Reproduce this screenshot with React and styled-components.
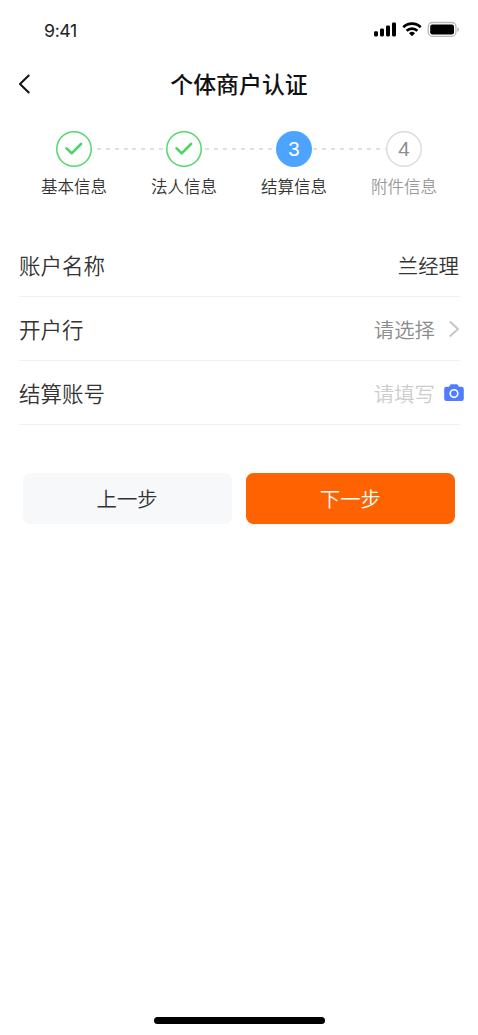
import React from "react";
import styled, { createGlobalStyle } from "styled-components";

const GlobalStyle = createGlobalStyle`
  * { box-sizing: border-box; }
  body {
    margin: 0;
    background: #fff;
    font-family: "Noto Sans CJK SC", sans-serif;
    font-weight: 350;
    color: #333;
  }
  button { font: inherit; border: 0; padding: 0; background: none; }
`;

const Screen = styled.div`
  width: 478px;
  height: 1035px;
  display: flex;
  flex-direction: column;
  background: #fff;
  overflow: hidden;
`;

const StatusBar = styled.header`
  height: 56px;
  padding: 2px 18px 0 44px;
  display: flex;
  align-items: center;
  justify-content: space-between;
`;

const Time = styled.span`
  font: 400 17.8px/22px Inter, sans-serif;
  letter-spacing: -0.4px;
  color: #222;
  padding-top: 4px;
`;

const StatusIcons = styled.svg`
  display: block;
`;

const NavBar = styled.nav`
  height: 57px;
  padding: 0 18px 2px;
  display: grid;
  grid-template-columns: 40px 1fr 40px;
  align-items: center;
`;

const BackButton = styled.button`
  display: flex;
`;

const Title = styled.h1`
  margin: 0;
  padding-bottom: 2px;
  font-size: 22.9px;
  line-height: 32px;
  font-weight: 500;
  color: #111;
  text-align: center;
`;

const Steps = styled.ol`
  list-style: none;
  margin: 18px 0 0;
  padding: 0 19px;
  height: 102px;
  display: flex;
`;

const StepItem = styled.li`
  width: 110.1px;
  display: flex;
  flex-direction: column;
  align-items: center;
`;

const StepHead = styled.div`
  width: 100%;
  height: 36px;
  display: grid;
  grid-template-columns: 1fr 36px 1fr;
  align-items: center;
`;

const circleLook = {
  done: "box-shadow: inset 0 0 0 1.5px #55d76d; color: #4fd468;",
  active: "background: #4da4ff; color: #fff;",
  todo: "box-shadow: inset 0 0 0 1.4px #dcdcdc; color: #8c8c8c;",
};

const Circle = styled.div`
  width: 36px;
  height: 36px;
  border-radius: 50%;
  display: flex;
  align-items: center;
  justify-content: center;
  font: 400 20.5px/24px "Liberation Sans", sans-serif;
  ${(p) => circleLook[p.$state]}
`;

const Dashes = styled.svg`
  display: block;
  width: 100%;
  height: 2px;
`;

const StepLabel = styled.span`
  margin-top: 7px;
  font-size: 16.5px;
  line-height: 25px;
  color: ${(p) => (p.$muted ? "#999" : "#333")};
`;

const Form = styled.section`
  padding: 0 18px 0 19px;
`;

const Row = styled.div`
  height: 63.9px;
  padding-top: 1.3px;
  border-bottom: 1.3px solid #f0f0f0;
  display: flex;
  align-items: center;
  justify-content: space-between;
`;

const RowLabel = styled.span`
  font-size: 21.5px;
  line-height: 30px;
  color: #333;
`;

const RowValue = styled.span`
  display: flex;
  align-items: center;
  gap: ${(p) => p.$gap || 0}px;
  margin-right: ${(p) => p.$shift || 0}px;
  font-size: 20.4px;
  line-height: 30px;
  color: ${(p) => p.$color};
`;

const Actions = styled.div`
  margin-top: 48.3px;
  padding: 0 23px 0 22.5px;
  display: grid;
  grid-template-columns: 1fr 1fr;
  gap: 14px;
`;

const ActionButton = styled.button`
  height: 51px;
  border-radius: 7.5px;
  font-size: 20.4px;
  line-height: 30px;
  background: ${(p) => (p.$primary ? "#ff6200" : "#f7f8fa")};
  color: ${(p) => (p.$primary ? "#fff" : "#333")};
`;

const HomeIndicator = styled.div`
  width: 171px;
  height: 6.5px;
  margin: auto auto 11.3px;
  border-radius: 4px;
  background: #000;
`;

const Check = () => (
  <svg width="18" height="14" viewBox="0 0 18 14" fill="none">
    <path d="M1.6 6.4 6.7 11.4 16 2" stroke="currentColor" strokeWidth="2.7" strokeLinecap="round" strokeLinejoin="round" />
  </svg>
);

const Line = ({ from, hidden }) => (
  <Dashes>
    {!hidden && <line x1={from} y1="1" x2="100%" y2="1" stroke="#d8d8d8" strokeWidth="1.6" strokeDasharray="4 5" />}
  </Dashes>
);

const steps = [
  { label: "基本信息", state: "done", right: 5 },
  { label: "法人信息", state: "done", left: 3, right: 3 },
  { label: "结算信息", state: "active", left: 2, right: 1 },
  { label: "附件信息", state: "todo", left: 0 },
];

export default function App() {
  return (
    <Screen>
      <GlobalStyle />
      <StatusBar>
        <Time>9:41</Time>
        <StatusIcons width="87" height="18" viewBox="0 0 87 18">
          <rect x="1" y="11.2" width="4" height="5.2" rx="1.3" />
          <rect x="7" y="8.5" width="4" height="7.9" rx="1.3" />
          <rect x="13" y="5.5" width="4" height="10.9" rx="1.3" />
          <rect x="19" y="2.5" width="4" height="13.9" rx="1.3" />
          <g fill="none" stroke="#000" strokeWidth="2.7">
            <path d="M30.3 7.2a12.4 12.4 0 0 1 17.4 0" />
            <path d="M33.6 10.8a7.8 7.8 0 0 1 10.8 0" />
          </g>
          <path d="M39 16.2 36 13.2a4.3 4.3 0 0 1 6 0z" />
          <rect x="55.3" y="2.5" width="27.6" height="13.8" rx="4" fill="none" stroke="#b8b8b8" strokeWidth="1.3" />
          <rect x="57.2" y="4.4" width="23.8" height="10" rx="2.2" />
          <path d="M84.4 7.2v4.6c1-.4 1.5-1.3 1.5-2.3s-.5-1.9-1.5-2.3z" fill="#aaa" />
        </StatusIcons>
      </StatusBar>
      <NavBar>
        <BackButton aria-label="返回">
          <svg width="13" height="20" viewBox="0 0 13 20" fill="none">
            <path d="M10.7 1.5 2 10l8.7 8.5" stroke="#111" strokeWidth="2" strokeLinecap="round" strokeLinejoin="round" />
          </svg>
        </BackButton>
        <Title>个体商户认证</Title>
      </NavBar>
      <Steps>
        {steps.map((s, i) => (
          <StepItem key={s.label}>
            <StepHead>
              <Line from={s.left} hidden={i === 0} />
              <Circle $state={s.state}>{s.state === "done" ? <Check /> : i + 1}</Circle>
              <Line from={s.right} hidden={i === steps.length - 1} />
            </StepHead>
            <StepLabel $muted={s.state === "todo"}>{s.label}</StepLabel>
          </StepItem>
        ))}
      </Steps>
      <Form>
        <Row>
          <RowLabel>账户名称</RowLabel>
          <RowValue $color="#333" $shift={1}>兰经理</RowValue>
        </Row>
        <Row>
          <RowLabel>开户行</RowLabel>
          <RowValue $color="#8c8c8c" $gap={13}>
            请选择
            <svg width="12" height="18" viewBox="0 0 12 18" fill="none">
              <path d="M1.8 1.5 10 9l-8.2 7.5" stroke="#c4c4c8" strokeWidth="1.8" />
            </svg>
          </RowValue>
        </Row>
        <Row>
          <RowLabel>结算账号</RowLabel>
          <RowValue $color="#ccc" $gap={9} $shift={-4}>
            请填写
            <svg width="20" height="18" viewBox="0 0 20 18">
              <path d="M2.5 2.8H5L6.3.8Q6.7.3 7.4.3h5.2q.7 0 1.1.5L15 2.800h2.5Q19.8 2.800 19.800 5v9.800q0 2.200-2.300 2.200h-15Q.2 17 .2 14.800V5q0-2.200 2.300-2.200z" fill="#4f7dff" />
              <circle cx="10" cy="9.6" r="3.8" fill="none" stroke="#fff" strokeWidth="1.6" />
            </svg>
          </RowValue>
        </Row>
      </Form>
      <Actions>
        <ActionButton>上一步</ActionButton>
        <ActionButton $primary>下一步</ActionButton>
      </Actions>
      <HomeIndicator />
    </Screen>
  );
}
